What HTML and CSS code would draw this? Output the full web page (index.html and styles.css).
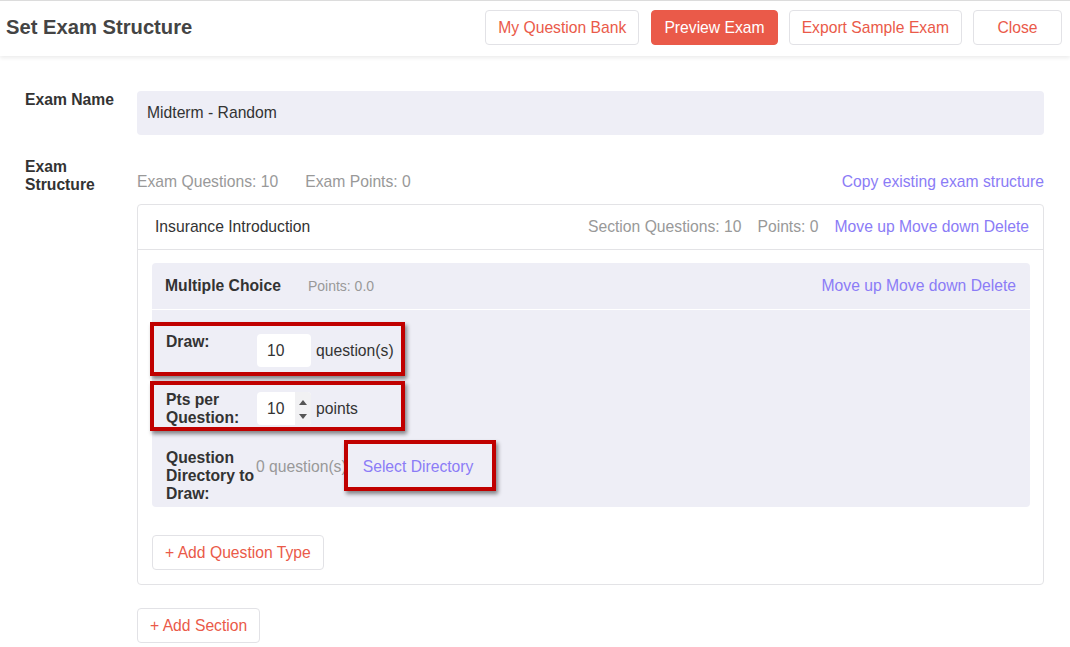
FILE: index.html
```html
<!DOCTYPE html>
<html>
<head>
<meta charset="utf-8">
<link rel="stylesheet" href="styles.css">
</head>
<body>
<header class="topbar">
  <h1 class="title">Set Exam Structure</h1>
  <div class="actions">
    <button class="btn">My Question Bank</button>
    <button class="btn btn-primary">Preview Exam</button>
    <button class="btn">Export Sample Exam</button>
    <button class="btn btn-close">Close</button>
  </div>
</header>
<main class="content">
  <div class="form-row">
    <div class="form-label">Exam Name</div>
    <div class="name-input">Midterm - Random</div>
  </div>
  <div class="form-row structure-row">
    <div class="form-label">Exam<br>Structure</div>
    <div class="structure">
      <div class="stats">
        <span class="muted">Exam Questions: 10</span>
        <span class="muted stat-gap">Exam Points: 0</span>
        <a class="link push">Copy existing exam structure</a>
      </div>
      <div class="section-card">
        <div class="section-head">
          <span class="section-name">Insurance Introduction</span>
          <span class="muted push">Section Questions: 10</span>
          <span class="muted small-gap">Points: 0</span>
          <span class="links small-gap"><a class="link">Move up</a> <a class="link">Move down</a> <a class="link">Delete</a></span>
        </div>
        <div class="section-body">
          <div class="qtype">
            <div class="qtype-head">
              <span class="qtype-name">Multiple Choice</span>
              <span class="qtype-points">Points: 0.0</span>
              <span class="links push"><a class="link">Move up</a> <a class="link">Move down</a> <a class="link">Delete</a></span>
            </div>
            <div class="qtype-body">
              <div class="q-row">
                <div class="q-label">Draw:</div>
                <div class="q-field">
                  <span class="num-input">10</span>
                  <span class="unit">question(s)</span>
                </div>
              </div>
              <div class="q-row">
                <div class="q-label">Pts per Question:</div>
                <div class="q-field">
                  <span class="num-input">10<span class="spinner"><span class="arr up"></span><span class="arr down"></span></span></span>
                  <span class="unit">points</span>
                </div>
              </div>
              <div class="q-row last">
                <div class="q-label">Question Directory to Draw:</div>
                <div class="q-field">
                  <span class="muted count">0 question(s)</span>
                  <a class="link select-dir">Select Directory</a>
                </div>
              </div>
            </div>
            <div class="mark mark-1"></div>
            <div class="mark mark-2"></div>
            <div class="mark mark-3"></div>
          </div>
          <button class="btn add-type">+ Add Question Type</button>
        </div>
      </div>
      <button class="btn add-section">+ Add Section</button>
    </div>
  </div>
</main>
</body>
</html>
```

FILE: styles.css
```css
* { box-sizing: border-box; }
html, body { margin: 0; padding: 0; background: #fff; }
body {
  font-family: "Liberation Sans", Arial, sans-serif;
  font-size: 15.7px;
  color: #333;
}
a { cursor: pointer; }

.topbar {
  height: 56px;
  border-top: 1px solid #dcdcdc;
  display: flex;
  align-items: center;
  justify-content: space-between;
  padding: 0 8px 2px 6px;
  box-shadow: 0 2px 4px rgba(0,0,0,0.08);
  position: relative;
}
.title {
  margin: 0;
  font-size: 20.2px;
  font-weight: bold;
  color: #444;
}
.actions { display: flex; gap: 11px; }

.btn {
  font-family: inherit;
  font-size: 15.7px;
  height: 35px;
  padding: 0 12px;
  background: #fff;
  color: #ea5a49;
  border: 1px solid #e2e2e6;
  border-radius: 4px;
}
.actions .btn:first-child { margin-right: 1px; }
.btn-primary { background: #ea5a49; border-color: #ea5a49; color: #fff; }
.btn-close { min-width: 89px; }

.content { padding: 35px 26px 0 25px; }
.form-row { display: grid; grid-template-columns: 112px 1fr; }
.form-label { font-weight: bold; font-size: 15.7px; line-height: 18px; color: #333; padding-top: 0; }
.name-input {
  height: 44px;
  background: #eeeef6;
  border-radius: 4px;
  padding: 0 10px;
  display: flex;
  align-items: center;
  color: #333;
}
.structure-row { margin-top: 23px; }

.stats { display: flex; align-items: center; height: 46px; padding-top: 2px; }
.muted { color: #999; }
.stat-gap { margin-left: 27px; }
.small-gap { margin-left: 16px; }
.push { margin-left: auto; }
.link { color: #8b7cf6; }

.section-card { border: 1px solid #e3e3e6; border-radius: 4px; }
.section-head {
  height: 45px;
  display: flex;
  align-items: center;
  padding: 0 14px 0 17px;
  border-bottom: 1px solid #e3e3e6;
}
.section-name { color: #333; }
.section-body { padding: 13px 13px 14px 14px; }

.qtype { background: #eeeef6; border-radius: 4px; position: relative; }
.qtype-head {
  height: 47px;
  display: flex;
  align-items: center;
  padding: 0 14px 0 13px;
  border-bottom: 1px solid #fff;
}
.qtype-name { font-weight: bold; color: #333; }
.qtype-points { font-size: 14px; color: #999; margin-left: 27px; }
.qtype-body { padding: 23px 14px 4px 14px; }

.q-row { display: flex; align-items: flex-start; min-height: 36px; margin-bottom: 22px; }
.q-row.last { margin-bottom: 0; }
.q-label { width: 90px; flex: none; font-weight: bold; line-height: 18px; color: #333; }
.q-field { display: flex; align-items: center; height: 35px; }
.num-input {
  position: relative;
  width: 54px;
  height: 33px;
  margin-left: 1px;
  background: #fff;
  border-radius: 4px;
  padding-left: 10px;
  display: flex;
  align-items: center;
  color: #333;
}
.spinner {
  position: absolute;
  right: 0; top: 0; bottom: 0;
  width: 16px;
  background: #f1f1f3;
  border-radius: 0 4px 4px 0;
  display: flex;
  flex-direction: column;
  align-items: center;
  justify-content: space-between;
  padding: 8px 0 6px;
}
.arr { width: 0; height: 0; border-left: 4px solid transparent; border-right: 4px solid transparent; }
.arr.up { border-bottom: 5px solid #555; }
.arr.down { border-top: 5px solid #555; }
.unit { margin-left: 5px; color: #333; }
.select-dir { margin-left: 16px; }

.mark {
  position: absolute;
  border: 4px solid #c00000;
  box-shadow: 2px 3px 4px rgba(0,0,0,0.45);
  pointer-events: none;
}
.mark-1 { left: -2px; top: 59px; width: 255px; height: 54px; }
.mark-2 { left: -2px; top: 118px; width: 255px; height: 50px; }
.mark-3 { left: 192px; top: 177px; width: 152px; height: 51px; }

.add-type { margin-top: 28px; }
.add-section { margin-top: 23px; }
```
